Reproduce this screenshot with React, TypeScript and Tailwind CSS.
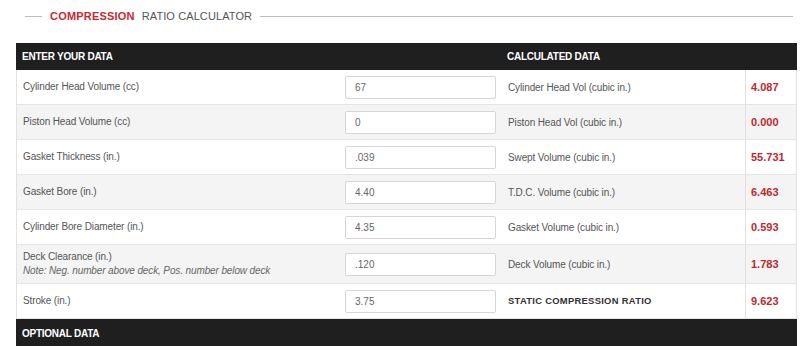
const inputs = [
  { label: 'Cylinder Head Volume (cc)', value: '67' },
  { label: 'Piston Head Volume (cc)', value: '0' },
  { label: 'Gasket Thickness (in.)', value: '.039' },
  { label: 'Gasket Bore (in.)', value: '4.40' },
  { label: 'Cylinder Bore Diameter (in.)', value: '4.35' },
  { label: 'Deck Clearance (in.)', value: '.120', note: 'Note: Neg. number above deck, Pos. number below deck' },
  { label: 'Stroke (in.)', value: '3.75' },
];

const results = [
  { label: 'Cylinder Head Vol (cubic in.)', value: '4.087' },
  { label: 'Piston Head Vol (cubic in.)', value: '0.000' },
  { label: 'Swept Volume (cubic in.)', value: '55.731' },
  { label: 'T.D.C. Volume (cubic in.)', value: '6.463' },
  { label: 'Gasket Volume (cubic in.)', value: '0.593' },
  { label: 'Deck Volume (cubic in.)', value: '1.783' },
  { label: 'STATIC COMPRESSION RATIO', value: '9.623', strong: true },
];

export default function App() {
  return (
    <div className="w-[800px] h-[346px] overflow-hidden bg-white font-['Liberation_Sans',Arial,sans-serif]">
      {/* Title */}
      <div className="flex items-center h-[33px] pl-[25px] pr-[7px]">
        <div className="w-[17px] h-px bg-[#bdbdbd]" />
        <h2 className="px-[8px] text-[11px] leading-none">
          <span className="font-bold text-[#c62a30] tracking-[0.2px]">COMPRESSION</span>
          <span className="ml-[7px] text-[#555] tracking-[0.1px]">RATIO CALCULATOR</span>
        </h2>
        <div className="flex-1 h-px bg-[#bdbdbd]" />
      </div>

      <div className="mt-[10px] ml-[16px] w-[781px]">
        {/* Header */}
        <div className="grid grid-cols-[486px_1fr] h-[27px] items-center bg-[#1f1f1f] text-white text-[10px] font-bold tracking-[-0.25px]">
          <div className="pl-[6px]">ENTER YOUR DATA</div>
          <div className="pl-[5px]">CALCULATED DATA</div>
        </div>

        {/* Rows */}
        <div className="border-l border-r border-[#e2e2e2]">
          {inputs.map((row, i) => {
            const res = results[i];
            const tall = !!row.note;
            return (
              <div
                key={row.label}
                className={`grid grid-cols-[322px_164px_242px_1fr] border-b border-[#e4e4e4] ${
                  i % 2 === 1 ? 'bg-[#f4f4f4]' : 'bg-white'
                } ${tall ? 'h-[39px]' : 'h-[35px]'}`}
              >
                <div className="flex flex-col justify-center pl-[6px] text-[10px] tracking-[-0.12px] text-[#555] leading-[14px]">
                  <span>{row.label}</span>
                  {row.note && <span className="italic text-[#666]">{row.note}</span>}
                </div>
                <div className="flex items-center px-[6px]">
                  <input
                    readOnly
                    value={row.value}
                    className="w-[151px] h-[23px] bg-white border border-[#d6d6d6] rounded-[2px] px-[9px] text-[10px] text-[#666] outline-none"
                  />
                </div>
                <div
                  className={`flex items-center pl-[5px] ${
                    res.strong
                      ? 'text-[9.4px] font-bold text-[#333] tracking-[0.3px]'
                      : 'text-[10px] tracking-[-0.12px] text-[#555]'
                  }`}
                >
                  {res.label}
                </div>
                <div className="flex items-center pl-[5px] border-l border-[#e0e0e0] text-[11px] font-bold text-[#c0282e]">
                  {res.value}
                </div>
              </div>
            );
          })}
        </div>

        {/* Optional header */}
        <div className="flex items-center h-[28px] bg-[#1f1f1f] text-white text-[10px] font-bold tracking-[-0.25px] pl-[6px]">
          OPTIONAL DATA
        </div>
      </div>
    </div>
  );
}
